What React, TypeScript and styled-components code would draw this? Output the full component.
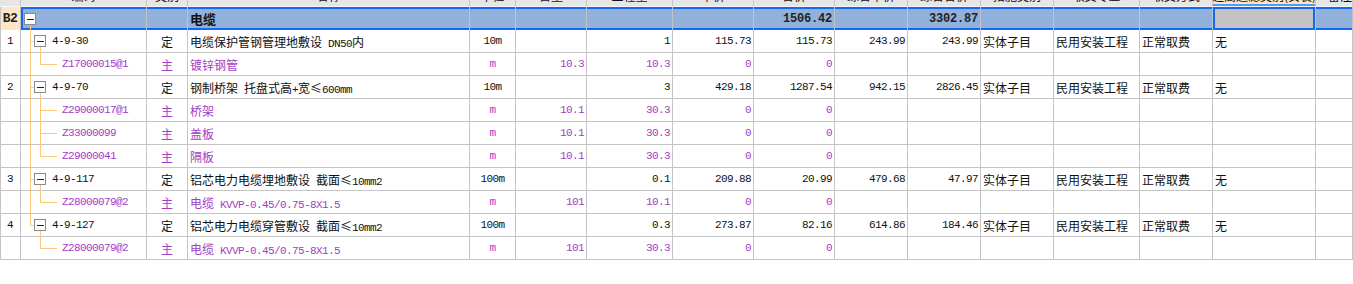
import React from 'react'
import styled, { createGlobalStyle, css } from 'styled-components'

const GlobalStyle = createGlobalStyle`
  html, body { margin: 0; padding: 0; background: #fff; }
  body { font-family: "Noto Sans CJK SC", "Liberation Sans", sans-serif; font-size: 12px; color: #111; }
`

const COLS = '21px 126px 41px 282px 46px 71px 86px 81px 81px 73px 73px 73px 86px 73px 103px 1fr'
const LINE = '#c4c4c4'
const BLUE = '#1668f2'
const TREE = '#ffc77a'
const PURPLE = '#a23dc4'

type Row = {
  num?: string
  level: 1 | 2
  code: string
  type: string
  name: string
  unit: string
  content?: string
  qty: string
  price: string
  total: string
  cprice?: string
  ctotal?: string
  cat?: string
  major?: string
  fee?: string
  extra?: string
}

const rows: Row[] = [
  { num: '1', level: 1, code: '4-9-30', type: '定', name: '电缆保护管钢管理地敷设 DN50内', unit: '10m', qty: '1', price: '115.73', total: '115.73', cprice: '243.99', ctotal: '243.99', cat: '实体子目', major: '民用安装工程', fee: '正常取费', extra: '无' },
  { level: 2, code: 'Z17000015@1', type: '主', name: '镀锌钢管', unit: 'm', content: '10.3', qty: '10.3', price: '0', total: '0' },
  { num: '2', level: 1, code: '4-9-70', type: '定', name: '钢制桥架 托盘式高+宽≤600mm', unit: '10m', qty: '3', price: '429.18', total: '1287.54', cprice: '942.15', ctotal: '2826.45', cat: '实体子目', major: '民用安装工程', fee: '正常取费', extra: '无' },
  { level: 2, code: 'Z29000017@1', type: '主', name: '桥架', unit: 'm', content: '10.1', qty: '30.3', price: '0', total: '0' },
  { level: 2, code: 'Z33000099', type: '主', name: '盖板', unit: 'm', content: '10.1', qty: '30.3', price: '0', total: '0' },
  { level: 2, code: 'Z29000041', type: '主', name: '隔板', unit: 'm', content: '10.1', qty: '30.3', price: '0', total: '0' },
  { num: '3', level: 1, code: '4-9-117', type: '定', name: '铝芯电力电缆埋地敷设 截面≤10mm2', unit: '100m', qty: '0.1', price: '209.88', total: '20.99', cprice: '479.68', ctotal: '47.97', cat: '实体子目', major: '民用安装工程', fee: '正常取费', extra: '无' },
  { level: 2, code: 'Z28000079@2', type: '主', name: '电缆 KVVP-0.45/0.75-8X1.5', unit: 'm', content: '101', qty: '10.1', price: '0', total: '0' },
  { num: '4', level: 1, code: '4-9-127', type: '定', name: '铝芯电力电缆穿管敷设 截面≤10mm2', unit: '100m', qty: '0.3', price: '273.87', total: '82.16', cprice: '614.86', ctotal: '184.46', cat: '实体子目', major: '民用安装工程', fee: '正常取费', extra: '无' },
  { level: 2, code: 'Z28000079@2', type: '主', name: '电缆 KVVP-0.45/0.75-8X1.5', unit: 'm', content: '101', qty: '30.3', price: '0', total: '0' },
]

const headers = ['', '编码', '类别', '名称', '单位', '含量', '工程量', '单价', '合价', '综合单价', '综合合价', '措施类别', '取费专业', '取费方式', '超高过滤类别(安装)', '备注']

const Sheet = styled.div`
  overflow: hidden;
  height: 284px;
`

const Table = styled.div`
  margin-top: -16px;
`

const RowLine = styled.div`
  display: grid;
  grid-template-columns: ${COLS};
  height: 23px;
`

const HeadCell = styled.div<{ $active?: boolean; $tail?: boolean }>`
  display: flex;
  align-items: center;
  justify-content: ${p => (p.$tail ? 'flex-end' : 'center')};
  background: ${p => (p.$active ? '#fde4c4' : '#e6e6e6')};
  border-right: 1px solid #c9c9c9;
  border-bottom: 1px solid #f6f6f6;
  box-shadow: ${p => (p.$active ? 'inset 0 -2px 0 #4d9cf5' : 'none')};
  white-space: nowrap;
  overflow: hidden;
`

const Cell = styled.div<{ $align?: 'left' | 'center' | 'right'; $sub?: boolean; $edge?: boolean }>`
  display: flex;
  align-items: center;
  justify-content: ${p => (p.$align === 'right' ? 'flex-end' : p.$align === 'center' ? 'center' : 'flex-start')};
  padding: 0 2px;
  border-right: 1px solid ${LINE};
  border-bottom: 1px solid ${LINE};
  color: ${p => (p.$sub ? PURPLE : '#111')};
  white-space: pre;
  overflow: hidden;
  min-width: 0;
  ${p => p.$edge && css`box-shadow: inset 1px 0 0 ${LINE};`}
`

const TreeCell = styled(Cell)`
  padding: 0;
  overflow: visible;
`

const GroupNum = styled.div`
  display: flex;
  align-items: center;
  justify-content: center;
  background: #fde5c7;
  border-right: 1px solid ${LINE};
  font-family: "Liberation Mono", monospace;
  font-weight: bold;
  font-size: 13px;
  letter-spacing: -0.5px;
  color: #222;
  box-shadow: inset 1px 0 0 ${LINE};
`

const GroupCell = styled.div<{ $first?: boolean; $current?: boolean; $align?: 'left' | 'right' }>`
  display: flex;
  align-items: center;
  justify-content: ${p => (p.$align === 'right' ? 'flex-end' : 'flex-start')};
  padding: ${p => (p.$first ? '0' : '0 2px')};
  background: ${p => (p.$current ? '#c3c3c3' : '#91b1db')};
  border-right: 1px solid #b9c4d3;
  white-space: nowrap;
  overflow: visible;
  box-shadow: inset 0 2px 0 ${BLUE}, inset 0 -2px 0 ${BLUE}
    ${p => (p.$first ? `, inset 2px 0 0 ${BLUE}` : '')}
    ${p => (p.$current ? `, inset 2px 0 0 ${BLUE}, inset -2px 0 0 ${BLUE}` : '')};
`

const GroupTitle = styled.span`
  font-weight: bold;
  font-size: 13px;
  color: #111;
`

const GroupNumber = styled.span`
  font-family: "Liberation Mono", monospace;
  font-weight: bold;
  font-size: 12px;
  letter-spacing: -0.2px;
  color: #222;
`

const Ascii = styled.span`
  font-family: "Liberation Mono", monospace;
  font-size: 11px;
  letter-spacing: -0.6px;
`

const Code = styled(Ascii)<{ $sub?: boolean }>`
  color: ${p => (p.$sub ? PURPLE : '#111')};
`

const Tree = styled.svg`
  flex: none;
  overflow: visible;
  display: block;
`

// splits mixed text so latin runs get the narrow half-width mono face
const Mixed = ({ text }: { text: string }) => (
  <span>
    {text.split(/([\x20-\x7e]+)/).filter(Boolean).map((part, i) =>
      /^[\x20-\x7e]+$/.test(part) ? <Ascii key={i}>{part}</Ascii> : <React.Fragment key={i}>{part}</React.Fragment>
    )}
  </span>
)

const Minus = ({ x }: { x: number }) => (
  <>
    <rect x={x + 0.5} y={5.5} width={11} height={11} fill="#fff" stroke="#8a8a8a" />
    <line x1={x + 3} y1={11.5} x2={x + 10} y2={11.5} stroke="#222" />
  </>
)

type TreeProps = { level: 0 | 1 | 2; outer?: 'full' | 'half' | 'none'; inner?: 'full' | 'half' | 'down' | 'none' }

const TreeGlyph = ({ level, outer = 'none', inner = 'none' }: TreeProps) => {
  const w = level === 0 ? 20 : level === 1 ? 31 : 41
  return (
    <Tree width={w} height={22} viewBox={`0 0 ${w} 22`}>
      {level === 0 && (
        <>
          <line x1={9.5} y1={17} x2={9.5} y2={23} stroke={TREE} />
          <Minus x={3} />
        </>
      )}
      {outer !== 'none' && <line x1={9.5} y1={0} x2={9.5} y2={outer === 'full' ? 23 : 11.5} stroke={TREE} />}
      {level === 1 && (
        <>
          <line x1={9.5} y1={11.5} x2={13} y2={11.5} stroke={TREE} />
          {inner === 'down' && <line x1={19.5} y1={17} x2={19.5} y2={23} stroke={TREE} />}
          <Minus x={13} />
        </>
      )}
      {level === 2 && (
        <>
          <line x1={19.5} y1={0} x2={19.5} y2={inner === 'full' ? 23 : 11.5} stroke={TREE} />
          <line x1={19.5} y1={11.5} x2={36} y2={11.5} stroke={TREE} />
        </>
      )}
    </Tree>
  )
}

const lastTop = rows.map(r => r.level).lastIndexOf(1)

export default function App() {
  return (
    <Sheet>
      <GlobalStyle />
      <Table>
        <RowLine>
          {headers.map((h, i) => (
            <HeadCell key={i} $active={i === 14} $tail={i === 15}>{h}</HeadCell>
          ))}
        </RowLine>

        <RowLine>
          <GroupNum>B2</GroupNum>
          <GroupCell $first>
            <TreeGlyph level={0} />
          </GroupCell>
          <GroupCell />
          <GroupCell><GroupTitle>电缆</GroupTitle></GroupCell>
          <GroupCell />
          <GroupCell />
          <GroupCell />
          <GroupCell />
          <GroupCell $align="right"><GroupNumber>1506.42</GroupNumber></GroupCell>
          <GroupCell />
          <GroupCell $align="right"><GroupNumber>3302.87</GroupNumber></GroupCell>
          <GroupCell />
          <GroupCell />
          <GroupCell />
          <GroupCell $current />
          <GroupCell />
        </RowLine>

        {rows.map((r, i) => {
          const sub = r.level === 2
          const topIdx = rows.slice(0, i + 1).map(x => x.level).lastIndexOf(1)
          const nextIsChild = rows[i + 1]?.level === 2
          const outer = sub ? (topIdx < lastTop ? 'full' : 'none') : i < lastTop ? 'full' : 'half'
          const inner = sub ? (nextIsChild ? 'full' : 'half') : nextIsChild ? 'down' : 'none'
          return (
            <RowLine key={i}>
              <Cell $align="center" $edge><Ascii>{r.num}</Ascii></Cell>
              <TreeCell>
                <TreeGlyph level={r.level} outer={outer} inner={inner} />
                <Code $sub={sub}>{r.code}</Code>
              </TreeCell>
              <Cell $align="center" $sub={sub}>{r.type}</Cell>
              <Cell $sub={sub}><Mixed text={r.name} /></Cell>
              <Cell $align="center" $sub={sub}><Ascii>{r.unit}</Ascii></Cell>
              <Cell $align="right" $sub={sub}><Ascii>{r.content}</Ascii></Cell>
              <Cell $align="right" $sub={sub}><Ascii>{r.qty}</Ascii></Cell>
              <Cell $align="right" $sub={sub}><Ascii>{r.price}</Ascii></Cell>
              <Cell $align="right" $sub={sub}><Ascii>{r.total}</Ascii></Cell>
              <Cell $align="right"><Ascii>{r.cprice}</Ascii></Cell>
              <Cell $align="right"><Ascii>{r.ctotal}</Ascii></Cell>
              <Cell>{r.cat}</Cell>
              <Cell>{r.major}</Cell>
              <Cell>{r.fee}</Cell>
              <Cell>{r.extra}</Cell>
              <Cell />
            </RowLine>
          )
        })}
      </Table>
    </Sheet>
  )
}
